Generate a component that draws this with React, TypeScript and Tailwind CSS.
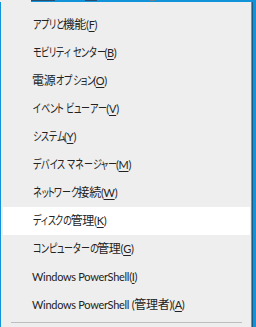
import React from "react";

type Item = { label: string; key: string };

const items: Item[] = [
  { label: "アプリと機能", key: "F" },
  { label: "モビリティ センター", key: "B" },
  { label: "電源オプション", key: "O" },
  { label: "イベント ビューアー", key: "V" },
  { label: "システム", key: "Y" },
  { label: "デバイス マネージャー", key: "M" },
  { label: "ネットワーク接続", key: "W" },
  { label: "ディスクの管理", key: "K" },
  { label: "コンピューターの管理", key: "G" },
  { label: "Windows PowerShell", key: "I" },
  { label: "Windows PowerShell (管理者)", key: "A" },
];

const font = { fontFamily: "Lato, 'Noto Sans CJK JP', sans-serif" };

// kana are drawn narrower, the way Yu Gothic UI draws them
function Label({ text }: { text: string }) {
  return (
    <>
      {Array.from(text).map((ch, i) => {
        if (/[\u3040-\u30ff]/.test(ch))
          return (
            <span key={i} className="inline-block text-[12px] tracking-[-3px] scale-x-75">
              {ch}
            </span>
          );
        if (/[\u4e00-\u9fff]/.test(ch))
          return (
            <span key={i} className="text-[12px] tracking-[-0.3px]">
              {ch}
            </span>
          );
        return <React.Fragment key={i}>{ch}</React.Fragment>;
      })}
    </>
  );
}

export default function App() {
  return (
    <div className="w-[256px] h-[327px] overflow-hidden bg-[#1193d9] flex flex-col">
      {/* bits of the taskbar behind the menu */}
      <div className="h-[2px] flex shrink-0">
        <div className="w-[31px] bg-[#eeeeee]" />
        <div className="w-[24px] h-[1px] bg-[#2a4f6e]" />
        <div className="w-[30px]" />
        <div className="w-[12px] h-[1px] bg-[#2a4f6e]" />
        <div className="w-[53px]" />
        <div className="w-[5px] h-[1px] bg-[#6b7f8c]" />
      </div>
      <div className="flex flex-1">
        <div className="w-[1px] bg-[#1193d9]" />
        <div
          className="w-[250px] bg-[#eeeeee] pl-[2px] pr-[1px] pt-[9px] text-[#222222] text-[11px] tracking-[-0.3px] [font-feature-settings:'palt']"
          style={font}
        >
          {items.map((it, i) => (
            <div
              key={it.key}
              className={
                "h-[28px] flex items-center pl-[29px] whitespace-nowrap " +
                (i === 7 ? "bg-white" : "")
              }
            >
              <span>
                <Label text={it.label} />(<span className="underline underline-offset-2">{it.key}</span>)
              </span>
            </div>
          ))}
          <div className="mx-[8px] mt-[3px] h-[1px] bg-[#bdbdbd]" />
        </div>
        <div className="w-[1px] bg-[#8c8c8c]" />
        <div className="w-[1px] bg-[#1b5c84]" />
        <div className="w-[3px] bg-[#1193d9]" />
      </div>
    </div>
  );
}
